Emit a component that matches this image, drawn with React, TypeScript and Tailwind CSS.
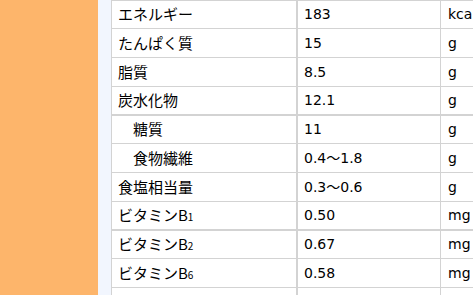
type Row = { label: string; sub?: string; indent?: boolean; value: string; unit: string; h: string; thick?: boolean };

const rows: Row[] = [
  { label: "エネルギー", value: "183", unit: "kcal", h: "h-[27px]" },
  { label: "たんぱく質", value: "15", unit: "g", h: "h-[28px]" },
  { label: "脂質", value: "8.5", unit: "g", h: "h-[28px]" },
  { label: "炭水化物", value: "12.1", unit: "g", h: "h-[27px]", thick: true },
  { label: "糖質", indent: true, value: "11", unit: "g", h: "h-[27px]" },
  { label: "食物繊維", indent: true, value: "0.4〜1.8", unit: "g", h: "h-[28px]" },
  { label: "食塩相当量", value: "0.3〜0.6", unit: "g", h: "h-[28px]" },
  { label: "ビタミンB", sub: "1", value: "0.50", unit: "mg", h: "h-[27px]", thick: true },
  { label: "ビタミンB", sub: "2", value: "0.67", unit: "mg", h: "h-[27px]" },
  { label: "ビタミンB", sub: "6", value: "0.58", unit: "mg", h: "h-[28px]" },
  { label: "ビタミンB", sub: "12", value: "0.9", unit: "µg", h: "h-[28px]" },
];

export default function App() {
  return (
    <div className="flex h-[295px] w-[473px] overflow-hidden bg-white text-black">
      <div className="w-[98px] shrink-0 bg-[#fdb56b]" />
      <div className="w-[13px] shrink-0 bg-[#f2f6fe]" />
      <div className="shrink-0 border-l border-t border-[#d3d3d3]">
        {rows.map((r, i) => (
          <div
            key={i}
            className={`flex items-center ${r.h} ${r.thick ? "border-b-2" : "border-b"} box-content border-[#d3d3d3]`}
          >
            <div
              className={`flex h-full w-[186px] items-center border-r-2 border-[#d3d3d3] font-['Noto_Sans_CJK_JP',sans-serif] text-[15px] ${r.indent ? "pl-[21px]" : "pl-[6px]"}`}
            >
              <span>
                {r.label}
                {r.sub && <span className="text-[10px]">{r.sub}</span>}
              </span>
            </div>
            <div className="flex h-full w-[143px] items-center border-r border-[#d3d3d3] pl-[6px] font-['DejaVu_Sans','Noto_Sans_CJK_JP',sans-serif] text-[14px]">
              {r.value}
            </div>
            <div className="flex h-full w-[60px] items-center pl-[7px] font-['DejaVu_Sans',sans-serif] text-[14px]">
              {r.unit}
            </div>
          </div>
        ))}
      </div>
    </div>
  );
}
